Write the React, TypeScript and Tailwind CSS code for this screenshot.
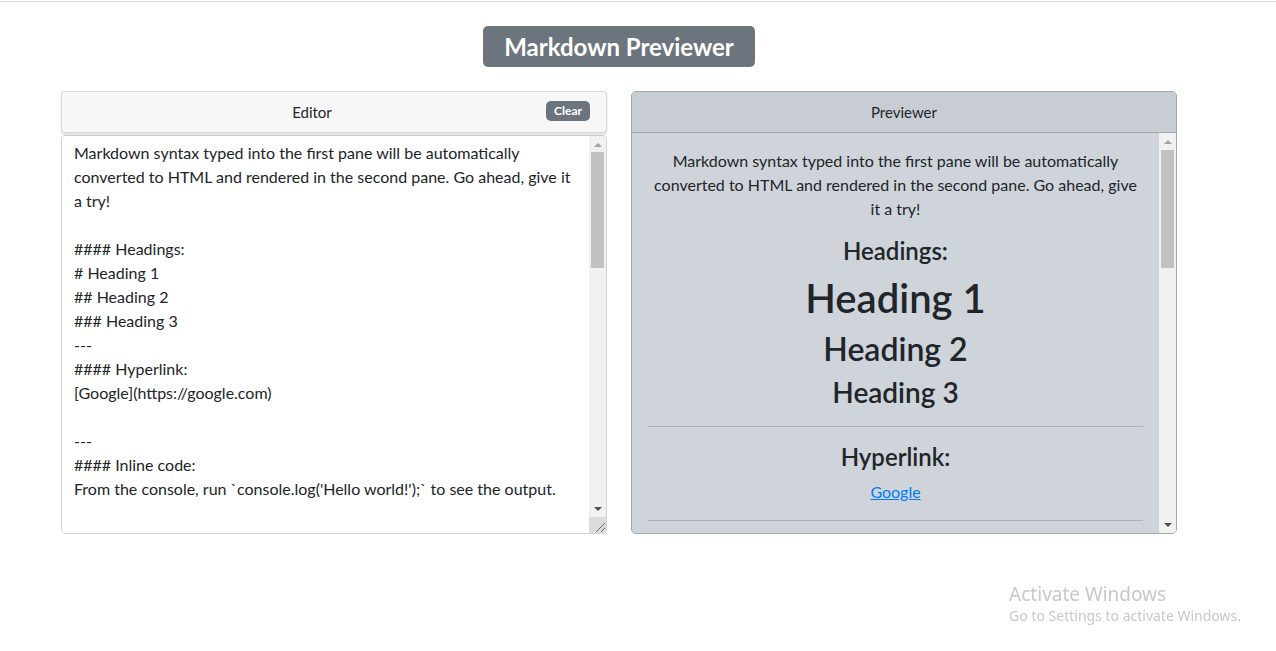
import React, { useState } from "react";

const defaultText = `Markdown syntax typed into the first pane will be automatically converted to HTML and rendered in the second pane. Go ahead, give it a try!

#### Headings:
# Heading 1
## Heading 2
### Heading 3
---
#### Hyperlink:
[Google](https://google.com)

---
#### Inline code:
From the console, run \`console.log('Hello world!');\` to see the output.

---
#### Code block:
\`\`\`
function greet(name) {
  return 'Hello, ' + name + '!';
}
\`\`\`

---
#### List:
- First item
- Second item
- Third item

---
#### Blockquote:
> Simplicity is the soul of efficiency.

---
#### Image:
![Markdown logo](https://markdown-here.com/img/icon256.png)

---
#### Bold text:
This is **bold** text.`;

const FONT = "font-['Lato','Noto_Sans',sans-serif]";

function Arrow({ up, dark }: { up?: boolean; dark?: boolean }) {
  return (
    <div className="h-[16px] shrink-0 flex items-center justify-center">
      <svg width="8" height="5" viewBox="0 0 8 5">
        {up ? (
          <polygon points="0,5 8,5 4,1" fill={dark ? "#505050" : "#a3a3a3"} />
        ) : (
          <polygon points="0,0 8,0 4,4" fill={dark ? "#505050" : "#a3a3a3"} />
        )}
      </svg>
    </div>
  );
}

function Scrollbar({
  thumbTop,
  thumbHeight,
  corner,
}: {
  thumbTop: number;
  thumbHeight: number;
  corner?: boolean;
}) {
  return (
    <div className="w-[17px] shrink-0 flex flex-col bg-[#f1f1f1]">
      <Arrow up />
      <div className="flex-1 px-[2px]">
        <div
          className="w-full bg-[#c1c1c1]"
          style={{ marginTop: thumbTop, height: thumbHeight }}
        />
      </div>
      <Arrow dark />
      {corner && (
        <div className="h-[16px] shrink-0 bg-[#dcdcdc] flex items-end justify-end">
          <svg width="14" height="14" viewBox="0 0 14 14">
            <line x1="4" y1="13" x2="13" y2="4" stroke="#6b6b6b" strokeWidth="1" />
            <line x1="9" y1="13" x2="13" y2="9" stroke="#6b6b6b" strokeWidth="1" />
          </svg>
        </div>
      )}
    </div>
  );
}

const H4 = "text-[24px] leading-[1.2] font-semibold mb-[8px]";
const HR = "my-[16px] border-t border-[rgba(0,0,0,0.16)]";

export default function App() {
  const [text, setText] = useState(defaultText);
  return (
    <div className={`min-h-screen bg-white text-[#212529] ${FONT}`}>
      <div className="h-px" />
      <div className="h-px bg-[#dcdcdc]" />
      <div className="w-[1238px] px-[61px]">
        <div className="flex justify-center pt-[24px]">
          <h1 className="h-[41px] px-[21px] flex items-center rounded-[5px] bg-[#6c757d] text-white text-[24px] font-bold leading-none">
            Markdown Previewer
          </h1>
        </div>
        <div className="grid grid-cols-2 gap-[24px] mt-[24px]">
          {/* Editor */}
          <div className="flex flex-col h-[443px]">
            <div className="relative h-[42px] shrink-0 flex items-center justify-center pr-[44px] rounded-[4px] border border-[rgba(0,0,0,0.125)] bg-[#f7f7f7] shadow-[0_2px_2px_rgba(0,0,0,0.12)] text-[15px]">
              Editor
              <button
                onClick={() => setText("")}
                className="absolute right-[16px] top-[9px] h-[20px] px-[8px] rounded-[5px] bg-[#6c757d] text-white text-[12px] font-bold leading-none"
              >
                Clear
              </button>
            </div>
            <div className="mt-[2px] flex-1 min-h-0 flex rounded-[4px] border border-[#ced4da] bg-white overflow-hidden">
              <textarea
                value={text}
                onChange={(e) => setText(e.target.value)}
                className="flex-1 h-full bg-white px-[12px] pt-[5px] pb-[6px] text-[16px] leading-[24px] text-[#212529] outline-none overflow-hidden resize-none"
              />
              <Scrollbar thumbTop={0} thumbHeight={116} corner />
            </div>
          </div>
          {/* Previewer */}
          <div className="flex flex-col h-[443px] rounded-[5px] border border-[#a3a8ae] bg-[#cfd4db] overflow-hidden">
            <div className="h-[41px] shrink-0 flex items-center justify-center bg-[#c8cdd4] border-b border-[#a3a8ae] text-[15px]">
              Previewer
            </div>
            <div className="flex-1 min-h-0 flex">
              <div className="flex-1 overflow-hidden px-[16px] pt-[16px] text-center text-[16px] leading-[24px]">
                <p className="mb-[16px] px-[4px]">
                  Markdown syntax typed into the first pane will be automatically converted to HTML and rendered in the second pane. Go ahead, give it a try!
                </p>
                <h4 className={H4}>Headings:</h4>
                <h1 className="text-[40px] leading-[1.2] font-semibold mb-[8px]">Heading 1</h1>
                <h2 className="text-[32px] leading-[1.2] font-semibold mb-[8px]">Heading 2</h2>
                <h3 className="text-[28px] leading-[1.2] font-semibold mb-[8px]">Heading 3</h3>
                <hr className={HR} />
                <h4 className={H4}>Hyperlink:</h4>
                <p className="mb-[16px]">
                  <a href="#" className="text-[#007bff] underline">Google</a>
                </p>
                <hr className={HR} />
                <h4 className={H4}>Inline code:</h4>
                <p className="mb-[16px]">
                  From the console, run <code className="font-['Liberation_Mono',monospace] text-[14px] text-[#e83e8c]">console.log('Hello world!');</code> to see the output.
                </p>
                <hr className={HR} />
                <h4 className={H4}>Code block:</h4>
                <pre className="mb-[16px] text-left font-['Liberation_Mono',monospace] text-[14px] leading-[20px]">{`function greet(name) {
  return 'Hello, ' + name + '!';
}`}</pre>
                <hr className={HR} />
                <h4 className={H4}>List:</h4>
                <ul className="mb-[16px] list-disc text-left pl-[40px]">
                  <li>First item</li>
                  <li>Second item</li>
                  <li>Third item</li>
                </ul>
                <hr className={HR} />
                <h4 className={H4}>Blockquote:</h4>
                <blockquote className="mb-[16px]">Simplicity is the soul of efficiency.</blockquote>
                <hr className={HR} />
                <h4 className={H4}>Bold text:</h4>
                <p className="mb-[16px]">This is <strong>bold</strong> text.</p>
              </div>
              <Scrollbar thumbTop={1} thumbHeight={118} />
            </div>
          </div>
        </div>
      </div>
      <div className="fixed right-[35px] bottom-[25px] text-[#c8c8c8] font-['Noto_Sans',sans-serif]">
        <div className="text-[19px] leading-[24px]">Activate Windows</div>
        <div className="text-[14px] leading-[20px]">Go to Settings to activate Windows.</div>
      </div>
    </div>
  );
}
